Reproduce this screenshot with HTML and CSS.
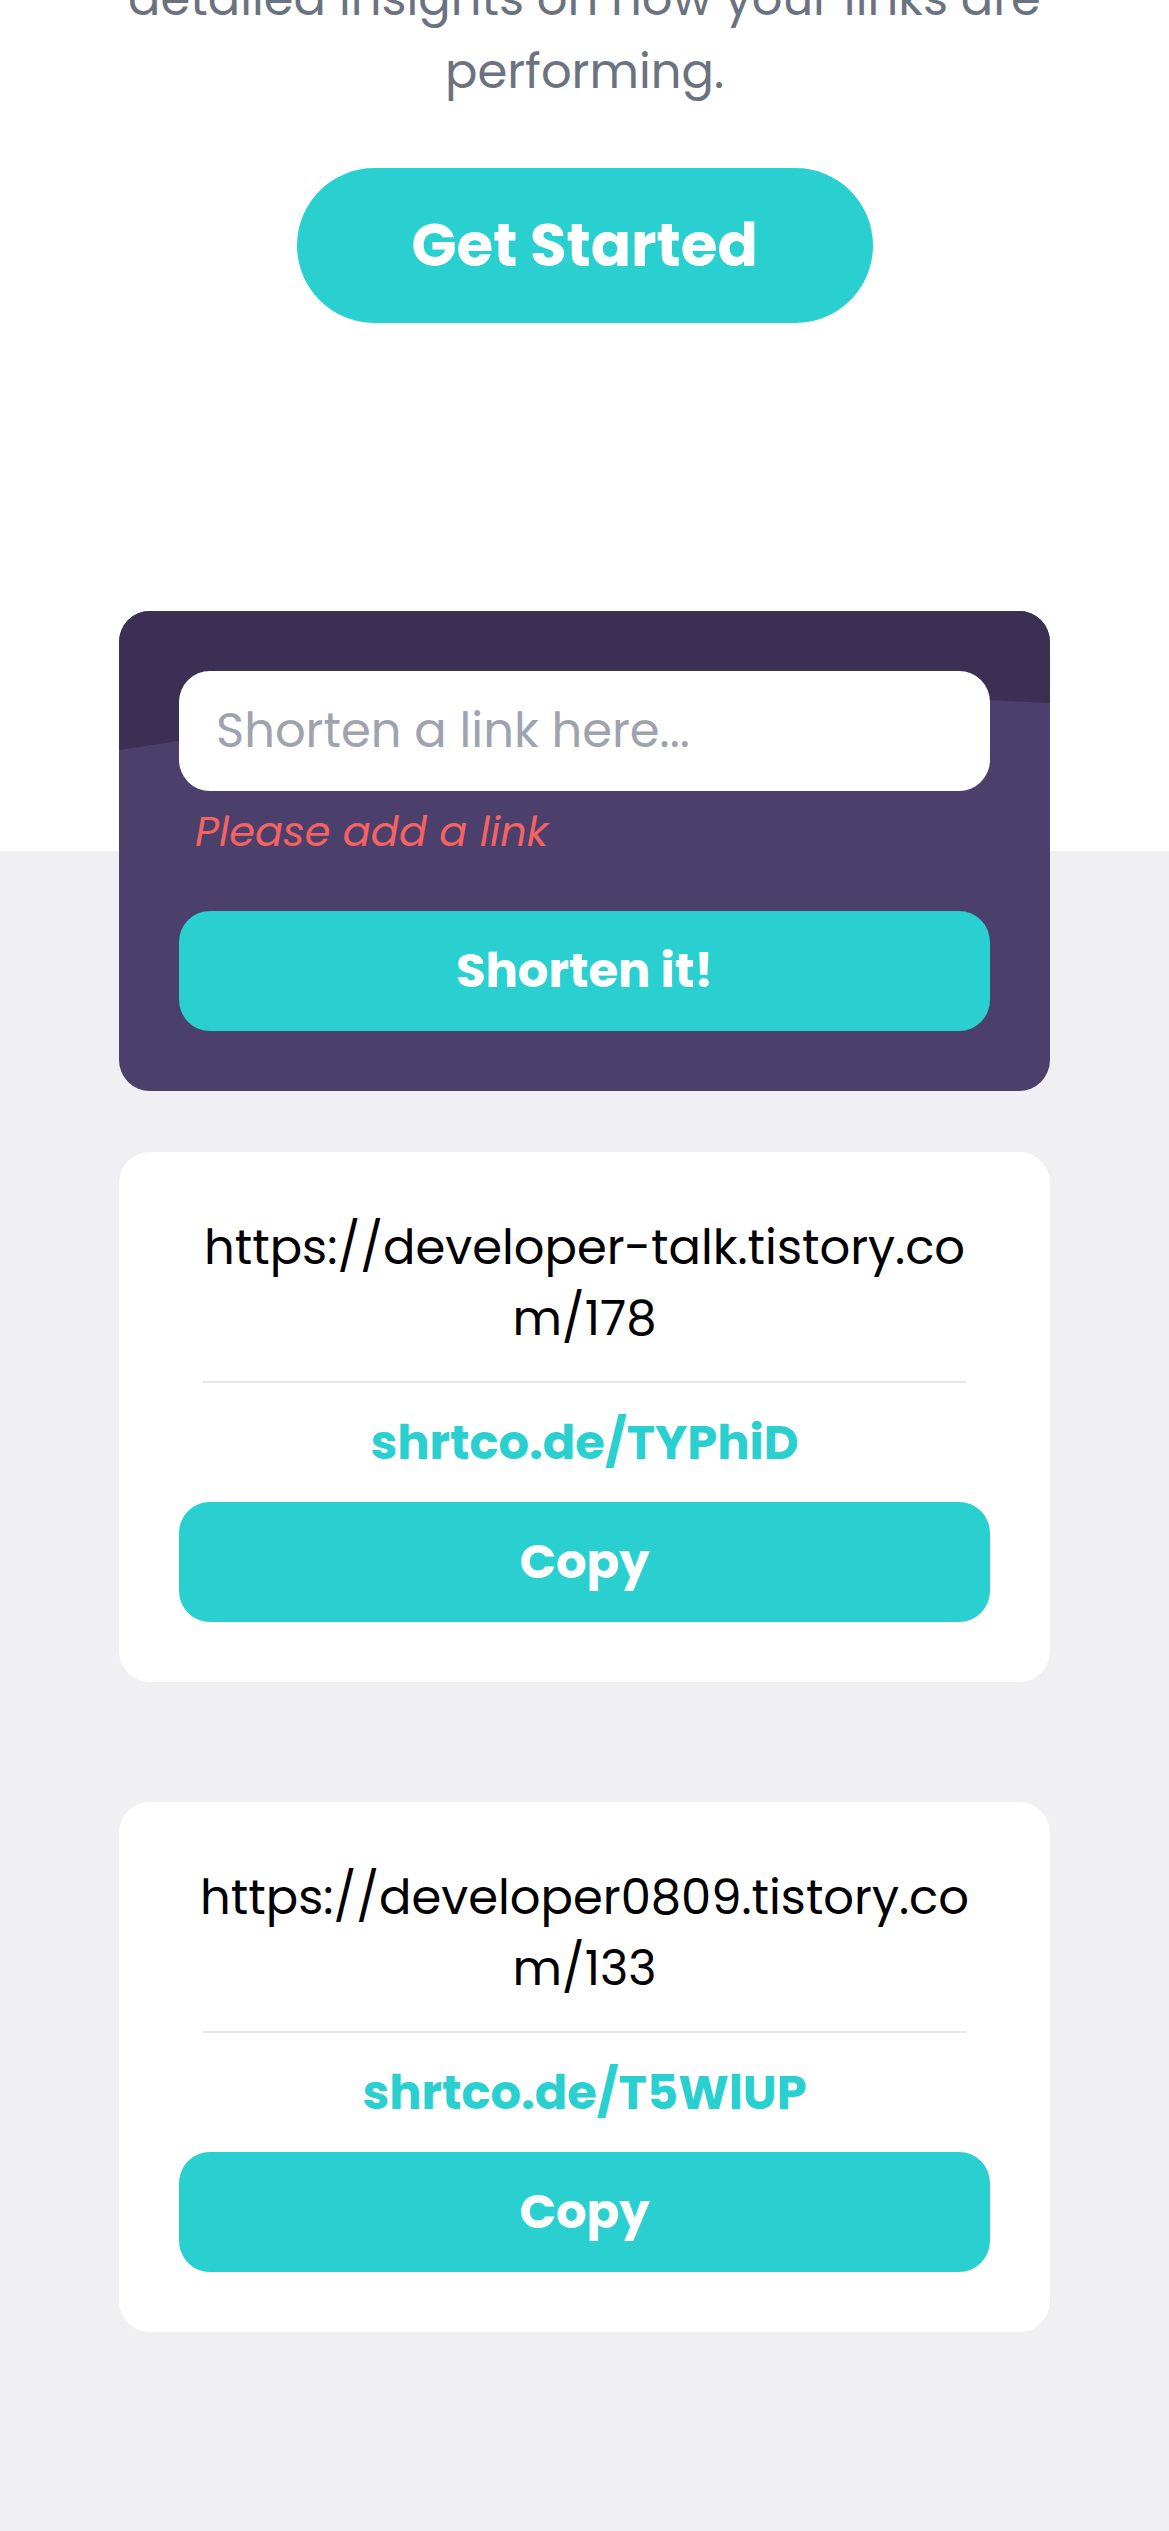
FILE: index.html
```html
<!DOCTYPE html>
<html lang="en">
<head>
<meta charset="utf-8">
<title>Shortly</title>
<link rel="stylesheet" href="styles.css">
</head>
<body>
<main>
  <section class="hero">
    <p class="hero-text">detailed insights on how your links are performing.</p>
    <a class="btn btn-start" href="#">Get Started</a>
  </section>
  <section class="links">
    <form class="shorten">
      <input class="shorten-input" type="text" placeholder="Shorten a link here...">
      <p class="shorten-error">Please add a link</p>
      <button class="btn btn-shorten" type="button">Shorten it!</button>
    </form>
    <ul class="results">
      <li class="result">
        <p class="result-url">https://developer-talk.tistory.com/178</p>
        <hr class="result-divider">
        <p class="result-short">shrtco.de/TYPhiD</p>
        <button class="btn btn-copy" type="button">Copy</button>
      </li>
      <li class="result">
        <p class="result-url">https://developer0809.tistory.com/133</p>
        <hr class="result-divider">
        <p class="result-short">shrtco.de/T5WlUP</p>
        <button class="btn btn-copy" type="button">Copy</button>
      </li>
    </ul>
  </section>
</main>
</body>
</html>
```
FILE: styles.css
```css
* { box-sizing: border-box; }

body {
  margin: 0;
  background: #f0f0f3;
  font-family: "Poppins", "Inter", "Noto Sans", sans-serif;
}

.hero {
  background: #ffffff;
  text-align: center;
  padding-bottom: 528px;
}

.hero-text {
  margin: -38px auto 0;
  max-width: 1000px;
  font-size: 48px;
  line-height: 73px;
  color: #6b7280;
}

.btn {
  display: flex;
  align-items: center;
  justify-content: center;
  border: 0;
  background: #2acfcf;
  color: #ffffff;
  font-family: inherit;
  font-weight: 700;
  text-decoration: none;
}

.btn-start {
  width: 576px;
  height: 155px;
  margin: 60px auto 0;
  border-radius: 80px;
  font-size: 59.5px;
}

.links {
  padding-bottom: 198px;
}

.shorten {
  position: relative;
  width: 931px;
  margin: -240px auto 0;
  padding: 60px;
  border-radius: 31px;
  background: #4b3f6b;
  overflow: hidden;
}

.shorten::before {
  content: "";
  position: absolute;
  inset: 0;
  background: #3b3054;
  clip-path: polygon(0 0, 100% 0, 100% 92px, 870px 89px, 60px 130px, 0 139px);
}

.shorten-input,
.shorten-error,
.btn-shorten {
  position: relative;
}

.shorten-input {
  display: block;
  width: 100%;
  height: 120px;
  padding: 0 37px;
  border: 0;
  border-radius: 31px;
  background: #ffffff;
  font-family: inherit;
  font-size: 48px;
  color: #333;
  outline: none;
}

.shorten-input::placeholder {
  color: #9ea3ae;
}

.shorten-error {
  margin: 11px 0 0 16px;
  font-size: 41.5px;
  line-height: 60px;
  font-style: italic;
  color: #f46262;
}

.btn-shorten {
  width: 100%;
  height: 120px;
  margin-top: 49px;
  border-radius: 31px;
  font-size: 48px;
}

.results {
  list-style: none;
  width: 931px;
  margin: 61px auto 0;
  padding: 0;
  display: flex;
  flex-direction: column;
  gap: 120px;
}

.result {
  background: #ffffff;
  border-radius: 31px;
  padding: 60px 60px 60px;
  text-align: center;
}

.result-url {
  width: 780px;
  margin: 0 auto;
  font-size: 48px;
  line-height: 71px;
  word-break: break-all;
  color: #000000;
}

.result-divider {
  height: 2px;
  margin: 27px 24px 0;
  border: 0;
  background: #e6e6ea;
}

.result-short {
  margin: 28px 0 0;
  font-size: 48px;
  line-height: 64px;
  font-weight: 700;
  color: #2acfcf;
}

.btn-copy {
  width: 100%;
  height: 120px;
  margin-top: 27px;
  border-radius: 31px;
  font-size: 48px;
}
```
